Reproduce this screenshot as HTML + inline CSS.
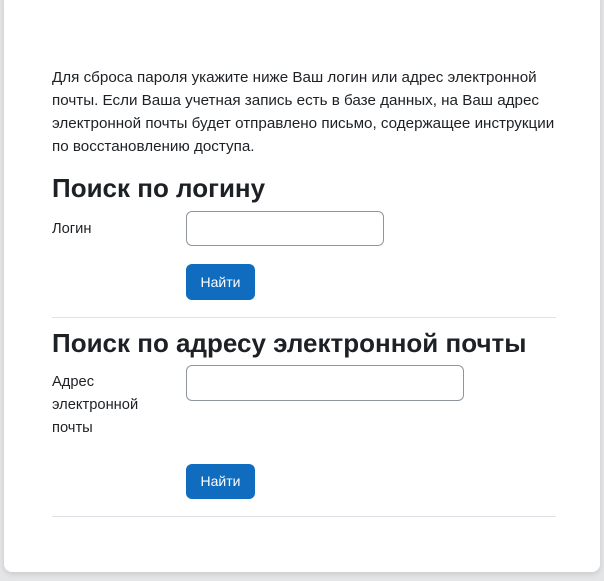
<!DOCTYPE html><html><head><meta charset="utf-8"><style>
body{margin:0;background:#e4e5e7;width:604px;height:581px;overflow:hidden;font-family:"Liberation Sans","DejaVu Sans",sans-serif;color:#1d2125}
.card{position:absolute;left:4px;top:-10px;width:596px;height:582px;background:#fff;border-radius:8px;box-shadow:0 2px 6px rgba(0,0,0,.12)}
.p{position:absolute;left:52px;top:66px;margin:0;font-size:15.2px;line-height:23px;white-space:nowrap}
h2{position:absolute;left:52px;margin:0;font-size:26px;font-weight:bold;white-space:nowrap}
.lbl{position:absolute;left:52px;font-size:14.7px;line-height:23px}
.in{position:absolute;left:186px;border:1px solid #8f959e;border-radius:6px;height:34px;box-sizing:border-box}
.btn{position:absolute;left:186px;width:69px;height:36px;background:#0f6cbf;color:#fff;border-radius:6px;font-size:14px;text-align:center;line-height:36px}
.hr{position:absolute;left:52px;width:504px;height:1px;background:#dee2e6}
</style></head><body>
<div class="card"></div>
<div class="p"><div>Для сброса пароля укажите ниже Ваш логин или адрес электронной</div><div>почты. Если Ваша учетная запись есть в базе данных, на Ваш адрес</div><div>электронной почты будет отправлено письмо, содержащее инструкции</div><div>по восстановлению доступа.</div></div>
<h2 style="top:173px">Поиск по логину</h2>
<div class="lbl" style="top:218px">Логин</div>
<div class="in" style="top:211px;width:198px;height:35px"></div>
<div class="btn" style="top:264px">Найти</div>
<div class="hr" style="top:317px"></div>
<h2 style="top:328px">Поиск по адресу электронной почты</h2>
<div class="lbl" style="top:371px">Адрес<br>электронной<br>почты</div>
<div class="in" style="top:365px;width:278px;height:36px"></div>
<div class="btn" style="top:464px;height:35px;line-height:35px">Найти</div>
<div class="hr" style="top:516px"></div>
</body></html>
